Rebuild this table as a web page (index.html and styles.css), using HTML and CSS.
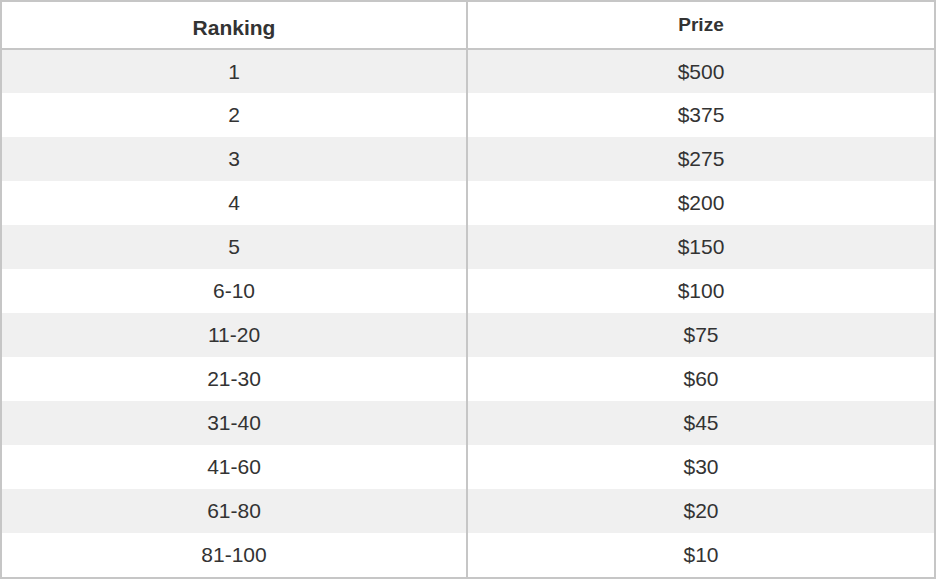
FILE: index.html
```html
<!DOCTYPE html>
<html lang="en">
<head>
<meta charset="utf-8">
<title>Prize table</title>
<link rel="stylesheet" href="styles.css">
</head>
<body>
<table class="prize-table">
  <colgroup>
    <col class="col-rank">
    <col class="col-prize">
  </colgroup>
  <thead>
    <tr class="head-row">
      <th class="head-rank">Ranking</th>
      <th class="head-prize">Prize</th>
    </tr>
  </thead>
  <tbody>
    <tr class="row odd first"><td>1</td><td>$500</td></tr>
    <tr class="row"><td>2</td><td>$375</td></tr>
    <tr class="row odd"><td>3</td><td>$275</td></tr>
    <tr class="row"><td>4</td><td>$200</td></tr>
    <tr class="row odd"><td>5</td><td>$150</td></tr>
    <tr class="row"><td>6-10</td><td>$100</td></tr>
    <tr class="row odd"><td>11-20</td><td>$75</td></tr>
    <tr class="row"><td>21-30</td><td>$60</td></tr>
    <tr class="row odd"><td>31-40</td><td>$45</td></tr>
    <tr class="row"><td>41-60</td><td>$30</td></tr>
    <tr class="row odd"><td>61-80</td><td>$20</td></tr>
    <tr class="row"><td>81-100</td><td>$10</td></tr>
  </tbody>
</table>
</body>
</html>
```
FILE: styles.css
```css
html, body {
  margin: 0;
  padding: 0;
  background: #ffffff;
}

.prize-table {
  width: 936px;
  border-collapse: separate;
  border-spacing: 0;
  border: 2px solid #c6c6c6;
  font-family: "Liberation Sans", Arial, sans-serif;
  color: #333333;
  table-layout: fixed;
}

.col-rank { width: 466px; }
.col-prize { width: 466px; }

.prize-table th,
.prize-table td {
  padding: 0;
  text-align: center;
  vertical-align: middle;
}

.prize-table th:first-child,
.prize-table td:first-child {
  border-right: 2px solid #c6c6c6;
}

.head-row {
  height: 48px;
}

.head-row th {
  border-bottom: 2px solid #c6c6c6;
  font-weight: bold;
}

.head-rank {
  font-size: 21px;
  padding-top: 6px !important;
}

.head-prize {
  font-size: 19px;
}

.row {
  height: 44px;
}

.row.first {
  height: 43px;
}

.row td {
  font-size: 21px;
}

.row.odd td {
  background: #f0f0f0;
}
```
